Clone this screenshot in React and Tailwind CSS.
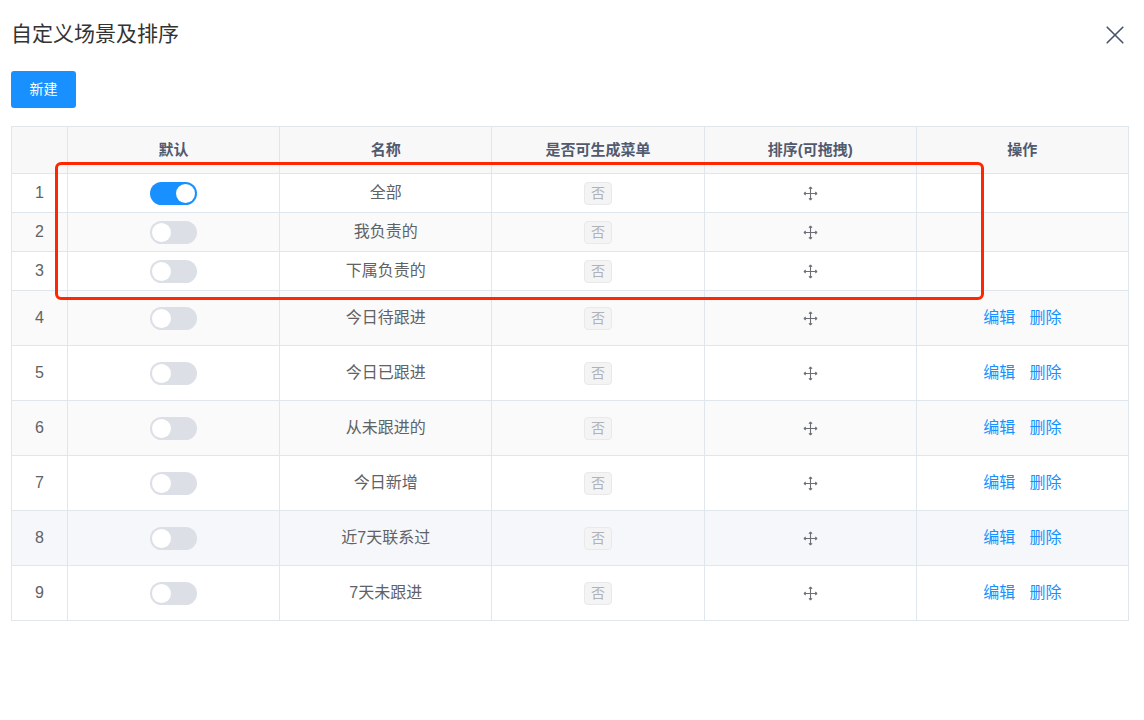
import { useState } from "react";

const initialRows = [
  { name: "全部", system: true },
  { name: "我负责的", system: true },
  { name: "下属负责的", system: true },
  { name: "今日待跟进" },
  { name: "今日已跟进" },
  { name: "从未跟进的" },
  { name: "今日新增" },
  { name: "近7天联系过", active: true },
  { name: "7天未跟进" },
];

const columns = ["默认", "名称", "是否可生成菜单", "排序(可拖拽)", "操作"];

function CloseIcon() {
  return (
    <svg width="18" height="18" viewBox="0 0 18 18" fill="none" stroke="#47536b" strokeWidth="1.6" strokeLinecap="round" aria-hidden="true">
      <path d="M1.2 1.2 16.8 16.8M16.8 1.2 1.2 16.8" />
    </svg>
  );
}

function MoveIcon() {
  return (
    <svg width="15" height="15" viewBox="0 0 15 15" aria-hidden="true">
      <path d="M7.5 1.5V13.5M1.5 7.5H13.5" stroke="#6b6e75" strokeWidth="1.1" />
      <path
        d="M7.5 .8 9 2.4H6ZM7.5 14.2 9 12.6H6ZM.8 7.5 2.4 6V9ZM14.2 7.5 12.6 6V9Z"
        fill="#6b6e75"
        stroke="#6b6e75"
        strokeWidth=".8"
        strokeLinejoin="round"
      />
    </svg>
  );
}

function Toggle({ checked, onChange, label }) {
  return (
    <input
      type="checkbox"
      role="switch"
      aria-label={label}
      checked={checked}
      onChange={onChange}
      className="block mx-auto h-[23px] w-[47px] cursor-pointer appearance-none rounded-full bg-[#dcdfe6] p-[2px] before:block before:size-[19px] before:rounded-full before:bg-white before:content-[''] checked:bg-[#1890ff] checked:before:ml-auto"
    />
  );
}

export default function App() {
  const [selected, setSelected] = useState(0);

  return (
    <main className="min-h-screen bg-white px-[11px] pt-4 pb-8 font-['Liberation_Sans','Noto_Sans_CJK_SC',sans-serif] text-[#606266]">
      <header className="flex items-center justify-between pr-[9px]">
        <h1 className="text-[21px] leading-9 text-[#333333]">自定义场景及排序</h1>
        <button type="button" aria-label="关闭" className="cursor-pointer pt-[2px]">
          <CloseIcon />
        </button>
      </header>

      <button
        type="button"
        className="mt-[19px] block h-[37px] w-[65px] cursor-pointer rounded-[3px] bg-[#1890ff] pb-[2px] text-[14px] leading-5 text-white"
      >
        新建
      </button>

      <div className="relative mt-[18px] pr-[4px]">
        <table className="w-full table-fixed border-collapse text-center text-[16px] leading-6">
          <thead>
            <tr className="h-[47px] bg-[#f8f8f9] text-[15px] text-[#515a6e]">
              <th aria-label="序号" className="w-[56px] border border-[#dfe6ec]" />
              {columns.map((title) => (
                <th key={title} scope="col" className="border border-[#dfe6ec] p-0 font-bold">
                  {title}
                </th>
              ))}
            </tr>
          </thead>
          <tbody>
            {initialRows.map((row, index) => (
              <tr
                key={row.name}
                className={`${row.system ? "h-[39px]" : "h-[55px]"} ${
                  row.active ? "bg-[#f5f7fa]" : index % 2 ? "bg-[#fafafa]" : "bg-white"
                }`}
              >
                <td className="border border-[#dfe6ec] p-0">{index + 1}</td>
                <td className="border border-[#dfe6ec] p-0">
                  <Toggle
                    label={`默认：${row.name}`}
                    checked={selected === index}
                    onChange={() => setSelected(index)}
                  />
                </td>
                <td className="border border-[#dfe6ec] p-0">{row.name}</td>
                <td className="border border-[#dfe6ec] p-0">
                  <span className="mx-auto flex h-[23px] w-[28px] items-center justify-center rounded-[4px] border border-[#e9e9eb] bg-[#f4f4f5] text-[14px] text-[#b0b2b7]">
                    否
                  </span>
                </td>
                <td className="border border-[#dfe6ec] p-0">
                  <button type="button" aria-label={`拖拽排序：${row.name}`} className="mx-auto block cursor-move">
                    <MoveIcon />
                  </button>
                </td>
                <td className="border border-[#dfe6ec] p-0">
                  {!row.system && (
                    <div className="flex justify-center gap-[14px] text-[#1890ff]">
                      <button type="button" className="cursor-pointer">编辑</button>
                      <button type="button" className="cursor-pointer">删除</button>
                    </div>
                  )}
                </td>
              </tr>
            ))}
          </tbody>
        </table>

        <div className="pointer-events-none absolute top-[36px] right-[149px] left-[44px] h-[138px] rounded-[6px] border-[3px] border-[#ff2600]" />
      </div>
    </main>
  );
}
